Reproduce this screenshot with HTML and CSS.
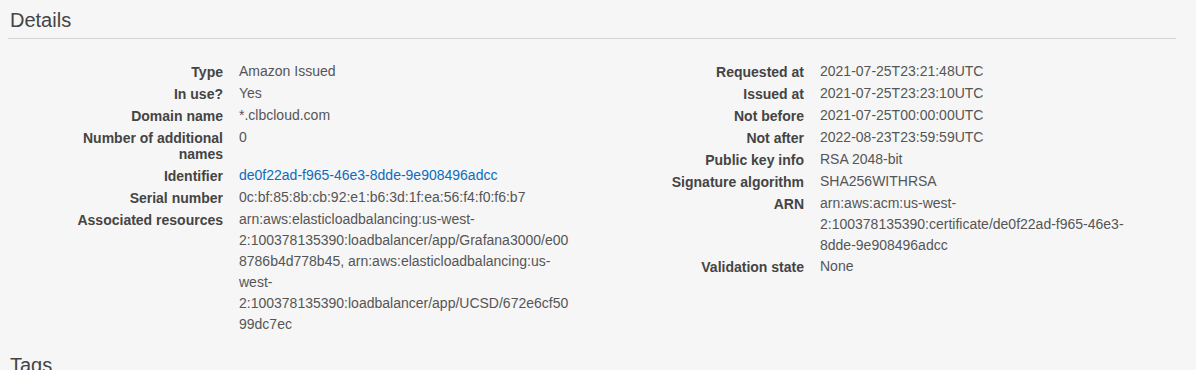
FILE: index.html
```html
<!DOCTYPE html>
<html lang="en">
<head>
    <meta charset="UTF-8">
    <meta name="viewport" content="width=device-width, initial-scale=1.0">
    <title>Certificate details</title>
    <link rel="stylesheet" href="styles.css">
</head>
<body>
    <div class="section">
        <h2 class="section-title">Details</h2>
        <div class="details">
            <dl class="kv">
                <div class="kv-row"><dt>Type</dt><dd>Amazon Issued</dd></div>
                <div class="kv-row"><dt>In use?</dt><dd>Yes</dd></div>
                <div class="kv-row"><dt>Domain name</dt><dd>*.clbcloud.com</dd></div>
                <div class="kv-row"><dt>Number of additional names</dt><dd>0</dd></div>
                <div class="kv-row"><dt>Identifier</dt><dd><a href="#">de0f22ad-f965-46e3-8dde-9e908496adcc</a></dd></div>
                <div class="kv-row"><dt>Serial number</dt><dd>0c:bf:85:8b:cb:92:e1:b6:3d:1f:ea:56:f4:f0:f6:b7</dd></div>
                <div class="kv-row"><dt>Associated resources</dt><dd>arn:aws:elasticloadbalancing:us-west-2:100378135390:loadbalancer/app/Grafana3000/e008786b4d778b45, arn:aws:elasticloadbalancing:us-west-2:100378135390:loadbalancer/app/UCSD/672e6cf5099dc7ec</dd></div>
            </dl>
            <dl class="kv">
                <div class="kv-row"><dt>Requested at</dt><dd>2021-07-25T23:21:48UTC</dd></div>
                <div class="kv-row"><dt>Issued at</dt><dd>2021-07-25T23:23:10UTC</dd></div>
                <div class="kv-row"><dt>Not before</dt><dd>2021-07-25T00:00:00UTC</dd></div>
                <div class="kv-row"><dt>Not after</dt><dd>2022-08-23T23:59:59UTC</dd></div>
                <div class="kv-row"><dt>Public key info</dt><dd>RSA 2048-bit</dd></div>
                <div class="kv-row"><dt>Signature algorithm</dt><dd>SHA256WITHRSA</dd></div>
                <div class="kv-row"><dt>ARN</dt><dd>arn:aws:acm:us-west-2:100378135390:certificate/de0f22ad-f965-46e3-8dde-9e908496adcc</dd></div>
                <div class="kv-row"><dt>Validation state</dt><dd>None</dd></div>
            </dl>
        </div>
    </div>
    <div class="section">
        <h2 class="section-title">Tags</h2>
    </div>
</body>
</html>
```

FILE: styles.css
```css
* {
    margin: 0;
    padding: 0;
    box-sizing: border-box;
}
body {
    background: #f6f6f6;
    font-family: "Liberation Sans", Arial, sans-serif;
    font-size: 14px;
    color: #555;
    padding: 0 20px 0 8px;
}
.section-title {
    font-size: 20px;
    font-weight: normal;
    line-height: 24px;
    color: #444;
    padding: 8px 2px 6px;
}
.section:first-child .section-title {
    border-bottom: 1px solid #d5d5d5;
}
.details {
    display: grid;
    grid-template-columns: 581px 1fr;
    margin: 22px 0 10px;
}
.kv-row {
    display: flex;
    gap: 16px;
}
.kv-row dt {
    width: 215px;
    padding: 3px 0 3px 65px;
    flex-shrink: 0;
    text-align: right;
    font-weight: bold;
    color: #444;
    line-height: 16px;
}
.kv-row dd {
    width: 334px;
    line-height: 21px;
    overflow-wrap: break-word;
}
.kv-row dd a {
    color: #0f6bbd;
    text-decoration: none;
}
```
